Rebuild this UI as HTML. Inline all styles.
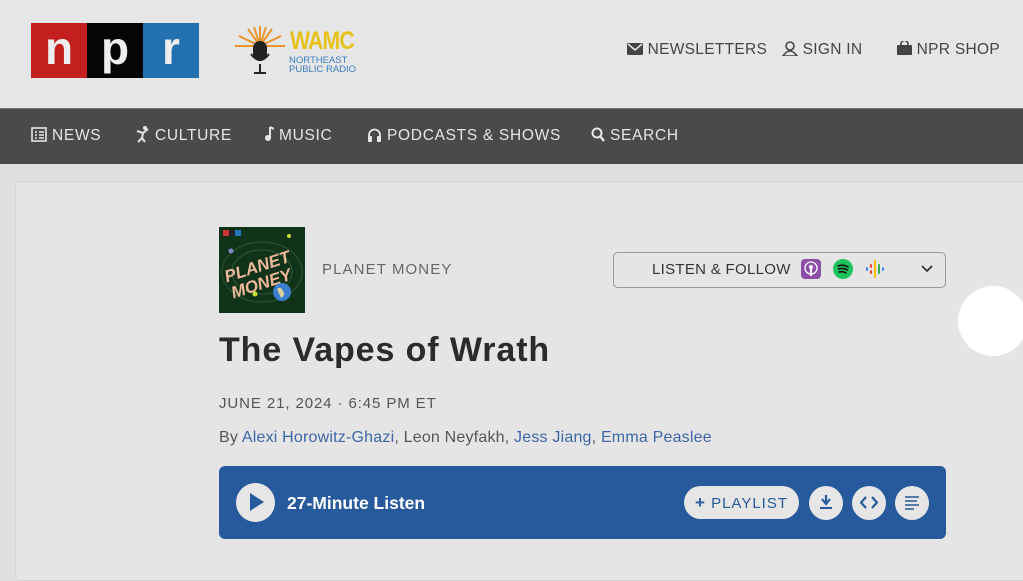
<!DOCTYPE html>
<html><head><meta charset="utf-8"><style>
*{margin:0;padding:0;box-sizing:border-box}
body{width:1023px;height:565px;overflow:hidden;background:#e0e0e0;font-family:"Liberation Sans",sans-serif;position:relative}
.hdr{position:absolute;left:0;top:0;width:1023px;height:108px;background:#e6e6e6}
.nav{position:absolute;left:0;top:108px;width:1023px;height:56px;background:#4a4a4a;border-top:1px solid #777}
.navi{position:absolute;top:0;height:56px;line-height:56px;color:#e6e6e6;font-size:15.5px;letter-spacing:.7px;white-space:nowrap}
.top{position:absolute;top:41px;color:#444;font-size:15.5px;letter-spacing:.3px;white-space:nowrap}
.card{position:absolute;left:15px;top:181px;width:1030px;height:400px;background:#e5e5e5;border:1px solid #d2d2d2;border-radius:4px}
.blue{color:#3c66a8}
</style></head><body>
<div class="hdr"></div>
<div style="position:absolute;left:31px;top:23px;width:168px;height:55px;display:flex">
<div style="flex:1;background:#c41f1f;color:#eee;font:bold 46px 'Liberation Sans';text-align:center;line-height:50px">n</div>
<div style="flex:1;background:#050505;color:#eee;font:bold 46px 'Liberation Sans';text-align:center;line-height:50px">p</div>
<div style="flex:1;background:#2370b0;color:#eee;font:bold 46px 'Liberation Sans';text-align:center;line-height:50px">r</div>
</div>
<svg style="position:absolute;left:234px;top:26px" width="52" height="50" viewBox="0 0 52 50">
<g stroke="#e8962a" stroke-width="2">
<line x1="26" y1="20" x2="26" y2="0"/><line x1="26" y1="20" x2="14" y2="3"/><line x1="26" y1="20" x2="38" y2="3"/><line x1="26" y1="20" x2="5" y2="10"/><line x1="26" y1="20" x2="47" y2="10"/><line x1="26" y1="20" x2="1" y2="20"/><line x1="26" y1="20" x2="51" y2="20"/><line x1="26" y1="20" x2="20" y2="1"/><line x1="26" y1="20" x2="32" y2="1"/></g>
<rect x="19" y="15" width="14" height="20" rx="7" fill="#222"/>
<path d="M17 28 q9 12 18 0 M26 38 v8 M20 47 h12" stroke="#222" stroke-width="2" fill="none"/></svg>
<div style="position:absolute;left:290px;top:27px;color:#e8c21a;font:bold 25px 'Liberation Sans';letter-spacing:-1px;transform:scaleX(.85);transform-origin:left">WAMC</div>
<div style="position:absolute;left:289px;top:56px;color:#3a7ec0;font-size:9.5px;line-height:9px">NORTHEAST<br>PUBLIC RADIO</div>
<div class="top" style="left:627px"><svg width="16" height="12" style="vertical-align:-1px"><rect width="16" height="12" rx="1" fill="#444"/><path d="M1 1 l7 6 l7 -6" stroke="#e6e6e6" fill="none" stroke-width="1.5"/></svg> NEWSLETTERS</div>
<div class="top" style="left:782px"><svg width="16" height="15" style="vertical-align:-2px"><circle cx="8" cy="5" r="4" fill="none" stroke="#444" stroke-width="1.6"/><path d="M1 15 q7 -10 14 0 z" fill="none" stroke="#444" stroke-width="1.6"/></svg> SIGN IN</div>
<div class="top" style="left:897px"><svg width="15" height="14" style="vertical-align:-1px"><rect y="4" width="15" height="10" rx="1" fill="#444"/><path d="M4 5 v-2 a3.5 3.5 0 0 1 7 0 v2" stroke="#444" fill="none" stroke-width="1.6"/></svg> NPR SHOP</div>
<div class="nav"></div>
<div class="navi" style="left:31px;top:108px"><svg width="16" height="15" style="vertical-align:-2px"><rect x="1" y="1" width="14" height="13" fill="none" stroke="#e6e6e6" stroke-width="1.6"/><path d="M4 5h2M8 5h5M4 8h2M8 8h5M4 11h2M8 11h5" stroke="#e6e6e6" stroke-width="1.4"/></svg> NEWS</div>
<div class="navi" style="left:136px;top:108px"><svg width="14" height="18" style="vertical-align:-3px"><circle cx="9" cy="3" r="2" fill="#e6e6e6"/><path d="M1 6 l6 2 l5 -4 M7 8 l-1 5 l-4 4 M6 13 l3 4" stroke="#e6e6e6" stroke-width="2" fill="none"/></svg> CULTURE</div>
<div class="navi" style="left:264px;top:108px"><svg width="10" height="16" style="vertical-align:-2px"><path d="M6 1 v11 M6 1 l4 2" stroke="#e6e6e6" stroke-width="2" fill="none"/><circle cx="4" cy="12" r="3" fill="#e6e6e6"/></svg> MUSIC</div>
<div class="navi" style="left:367px;top:108px"><svg width="15" height="15" style="vertical-align:-2px"><path d="M2 11 v-3 a5.5 5.5 0 0 1 11 0 v3" stroke="#e6e6e6" stroke-width="1.8" fill="none"/><rect x="1" y="9" width="4" height="6" rx="1" fill="#e6e6e6"/><rect x="10" y="9" width="4" height="6" rx="1" fill="#e6e6e6"/></svg> PODCASTS &amp; SHOWS</div>
<div class="navi" style="left:591px;top:108px"><svg width="14" height="15" style="vertical-align:-2px"><circle cx="6" cy="6" r="4.5" stroke="#e6e6e6" stroke-width="2" fill="none"/><path d="M9 9 l4 5" stroke="#e6e6e6" stroke-width="2.4"/></svg> SEARCH</div>
<div class="card"></div>
<svg style="position:absolute;left:219px;top:227px" width="86" height="86" viewBox="0 0 86 86">
<rect width="86" height="86" fill="#11331a"/>
<g fill="none" stroke="#2d5a35"><ellipse cx="43" cy="45" rx="40" ry="30"/><ellipse cx="43" cy="45" rx="30" ry="22"/></g>
<rect x="4" y="3" width="6" height="6" fill="#c33"/><rect x="10" y="3" width="6" height="6" fill="#222"/><rect x="16" y="3" width="6" height="6" fill="#27b"/>
<text x="40" y="45" font-family="Liberation Sans" font-weight="bold" font-style="italic" font-size="17" fill="#f0b89a" text-anchor="middle" transform="rotate(-18 40 45)">PLANET</text>
<text x="44" y="62" font-family="Liberation Sans" font-weight="bold" font-style="italic" font-size="17" fill="#f0b89a" text-anchor="middle" transform="rotate(-18 44 62)">MONEY</text>
<circle cx="63" cy="65" r="9" fill="#3a7fd0"/><path d="M58 62 q4 -3 6 2 q3 4 -2 7" fill="#d8d0a0"/>
<circle cx="36" cy="67" r="2.5" fill="#cd3"/><circle cx="12" cy="24" r="2.5" fill="#88c"/><circle cx="70" cy="9" r="2" fill="#cd3"/></svg>
<div style="position:absolute;left:322px;top:261px;color:#666;font-size:15px;letter-spacing:1.1px">PLANET MONEY</div>
<div style="position:absolute;left:613px;top:252px;width:333px;height:36px;border:1.5px solid #999;border-radius:5px"></div>
<div style="position:absolute;left:652px;top:261px;color:#333;font-size:15px;letter-spacing:.3px">LISTEN &amp; FOLLOW</div>
<svg style="position:absolute;left:801px;top:259px" width="20" height="20"><rect width="20" height="20" rx="4" fill="#8d4ea8"/><circle cx="10" cy="9" r="6" stroke="#fff" fill="none" stroke-width="1.3"/><circle cx="10" cy="8" r="2" fill="#fff"/><rect x="9" y="10" width="2" height="7" fill="#fff"/></svg>
<svg style="position:absolute;left:833px;top:259px" width="20" height="20"><circle cx="10" cy="10" r="10" fill="#1ec35b"/><path d="M5 7 q5 -2 10 1 M5.5 10 q4.5 -1.5 9 1 M6 13 q4 -1 7 1" stroke-width="1.6" fill="none" stroke-linecap="round" style="stroke:#111"/></svg>
<svg style="position:absolute;left:865px;top:259px" width="20" height="20"><g stroke-width="2" stroke-linecap="round"><path d="M2 9v2" stroke="#4285f4"/><path d="M6 6v2M6 12v2" stroke="#ea4335"/><path d="M10 2v16" stroke="#fbbc04"/><path d="M14 6v8" stroke="#34a853"/><path d="M18 9v2" stroke="#4285f4"/></g></svg>
<svg style="position:absolute;left:921px;top:265px" width="12" height="8"><path d="M1 1 l5 5 l5 -5" stroke="#333" stroke-width="1.8" fill="none"/></svg>
<div style="position:absolute;left:958px;top:286px;width:70px;height:70px;border-radius:50%;background:#fff"></div>
<div style="position:absolute;left:219px;top:331px;color:#2b2b2b;font-size:34px;font-weight:bold;letter-spacing:.9px;white-space:nowrap">The Vapes of Wrath</div>
<div style="position:absolute;left:219px;top:395px;color:#555;font-size:15px;letter-spacing:.9px">JUNE 21, 2024 · 6:45 PM ET</div>
<div style="position:absolute;left:219px;top:429px;color:#555;font-size:16px;letter-spacing:.2px;white-space:nowrap">By <span class="blue">Alexi Horowitz-Ghazi</span>, Leon Neyfakh, <span class="blue">Jess Jiang</span>, <span class="blue">Emma Peaslee</span></div>
<div style="position:absolute;left:219px;top:466px;width:727px;height:73px;background:#275a9c;border-radius:6px"></div>
<div style="position:absolute;left:236px;top:483px;width:39px;height:39px;border-radius:50%;background:#e6e6e6"></div>
<svg style="position:absolute;left:250px;top:493px" width="14" height="18"><path d="M0 0 L14 9 L0 18z" fill="#275a9c"/></svg>
<div style="position:absolute;left:287px;top:493px;color:#fff;font-size:17.5px;font-weight:bold">27-Minute Listen</div>
<div style="position:absolute;left:684px;top:486px;width:115px;height:33px;border-radius:17px;background:#e6e6e6;color:#275a9c;font-size:15px;letter-spacing:1px;line-height:33px;text-align:center"><b style="font-size:17px">+</b> PLAYLIST</div>
<div style="position:absolute;left:809px;top:486px;width:34px;height:34px;border-radius:50%;background:#e6e6e6"></div>
<svg style="position:absolute;left:819px;top:495px" width="14" height="15"><path d="M7 0v8M3 4l4 5 4-5" stroke="#275a9c" stroke-width="2.2" fill="none"/><rect x="1" y="12" width="12" height="2" fill="#275a9c"/></svg>
<div style="position:absolute;left:852px;top:486px;width:34px;height:34px;border-radius:50%;background:#e6e6e6"></div>
<svg style="position:absolute;left:860px;top:496px" width="18" height="13"><path d="M6 1l-5 5.5 5 5.5M12 1l5 5.5-5 5.5" stroke="#275a9c" stroke-width="2.2" fill="none"/></svg>
<div style="position:absolute;left:895px;top:486px;width:34px;height:34px;border-radius:50%;background:#e6e6e6"></div>
<svg style="position:absolute;left:905px;top:496px" width="14" height="14"><path d="M0 1h14M0 5h12M0 9h14M0 13h9" stroke="#275a9c" stroke-width="1.5"/></svg>
</body></html>
